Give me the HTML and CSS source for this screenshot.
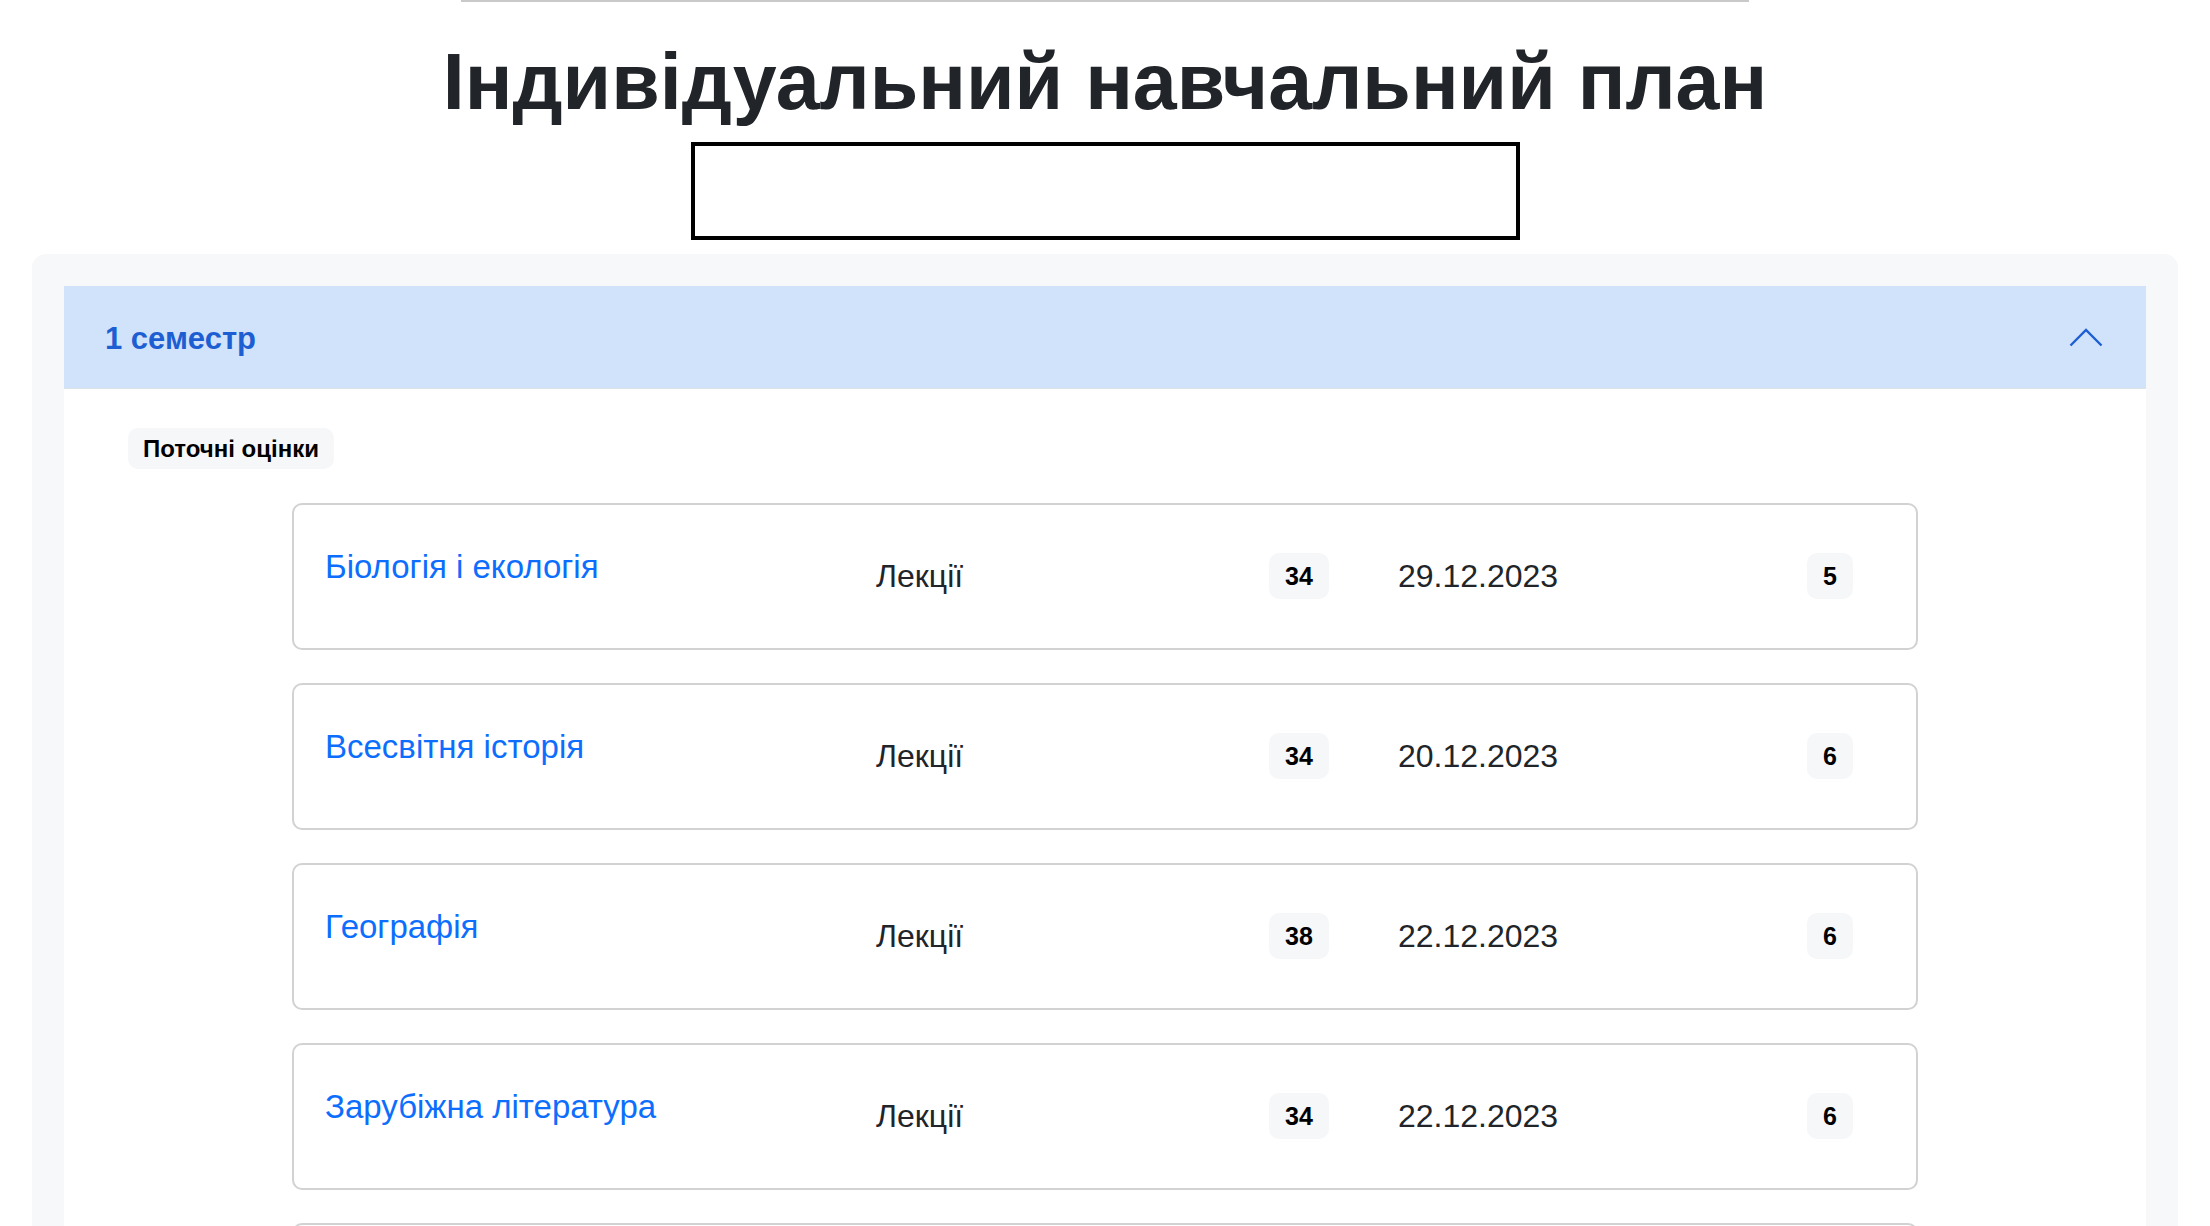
FILE: index.html
```html
<!DOCTYPE html>
<html lang="uk">
<head>
    <meta charset="UTF-8">
    <title>Індивідуальний навчальний план</title>
    <link rel="stylesheet" href="styles.css">
</head>
<body>
    <div class="top-line"></div>

    <h1 class="page-title">Індивідуальний навчальний план</h1>
    <div class="student-box"></div>

    <div class="plan">
        <div class="semester">
            <div class="semester-head">
                <span>1 семестр</span>
                <svg class="chevron" width="34" height="19" viewBox="0 0 34 19">
                    <path d="M1.5 17.5 L17 2 L32.5 17.5" fill="none" stroke="#1d5fd2" stroke-width="2.4"/>
                </svg>
            </div>

            <div class="semester-body">
                <span class="tag">Поточні оцінки</span>

                <ul class="marks">
                    <li class="mark-row">
                        <a href="#" class="subject">Біологія і екологія</a>
                        <span class="kind">Лекції</span>
                        <span><b class="pill">34</b></span>
                        <span class="date">29.12.2023</span>
                        <span><b class="pill">5</b></span>
                    </li>
                    <li class="mark-row">
                        <a href="#" class="subject">Всесвітня історія</a>
                        <span class="kind">Лекції</span>
                        <span><b class="pill">34</b></span>
                        <span class="date">20.12.2023</span>
                        <span><b class="pill">6</b></span>
                    </li>
                    <li class="mark-row">
                        <a href="#" class="subject">Географія</a>
                        <span class="kind">Лекції</span>
                        <span><b class="pill">38</b></span>
                        <span class="date">22.12.2023</span>
                        <span><b class="pill">6</b></span>
                    </li>
                    <li class="mark-row">
                        <a href="#" class="subject">Зарубіжна література</a>
                        <span class="kind">Лекції</span>
                        <span><b class="pill">34</b></span>
                        <span class="date">22.12.2023</span>
                        <span><b class="pill">6</b></span>
                    </li>
                    <li class="mark-row">
                        <a href="#" class="subject">Інформатика</a>
                        <span class="kind">Лекції</span>
                        <span><b class="pill">34</b></span>
                        <span class="date">21.12.2023</span>
                        <span><b class="pill">7</b></span>
                    </li>
                </ul>
            </div>
        </div>
    </div>
</body>
</html>
```

FILE: styles.css
```css
*{
    margin: 0;
    padding: 0;
    box-sizing: border-box;
}
body{
    font-family: "Liberation Sans", Arial, sans-serif;
    color: #212529;
    background: #fff;
}
li{
    list-style: none;
}
a{
    text-decoration: none;
}

/* смуга від шапки зверху */
.top-line{
    width: 1288px;
    height: 2px;
    margin: 0 auto;
    background: #c9c9c9;
}
.page-title{
    margin-top: 33px;
    font-size: 79px;
    font-weight: bold;
    line-height: 1.2;
    text-align: center;
    color: #212529;
}
.student-box{
    width: 829px;
    height: 98px;
    margin: 12px auto 0;
    border: 4px solid #000;
}

.plan{
    margin: 14px 32px 0;
    padding: 32px 32px 0;
    background: #f7f8fa;
    border-radius: 14px 14px 0 0;
}
.semester-head{
    display: flex;
    align-items: center;
    justify-content: space-between;
    height: 103px;
    padding: 5px 43px 0 41px;
    background: #d1e2fb;
    border-bottom: 1px solid #dde2e8;
    color: #1d5fd2;
    font-size: 31px;
    font-weight: bold;
}
.chevron{
    display: block;
    margin-top: -4px;
}
.semester-body{
    background: #fff;
    padding: 39px 0 40px;
}
.tag{
    display: inline-block;
    margin-left: 64px;
    height: 41px;
    line-height: 41px;
    padding: 0 15px;
    border-radius: 10px;
    background: #f6f7f9;
    color: #000;
    font-size: 24px;
    font-weight: bold;
}
.marks{
    width: 1626px;
    margin: 34px auto 0;
    display: flex;
    flex-direction: column;
    gap: 33px;
}
.mark-row{
    display: grid;
    grid-template-columns: 551px 393px 129px 409px auto;
    align-items: center;
    height: 147px;
    padding-left: 31px;
    border: 2px solid #d2d2d2;
    border-radius: 10px;
    font-size: 32px;
}
.subject{
    color: #0d6efd;
    font-size: 33px;
    margin-bottom: 18px;
}
.kind, .date{
    color: #212529;
}
.pill{
    display: inline-flex;
    align-items: center;
    justify-content: center;
    height: 46px;
    padding: 0 16px;
    border-radius: 10px;
    background: #f6f7f9;
    color: #000;
    font-size: 25px;
}
```
